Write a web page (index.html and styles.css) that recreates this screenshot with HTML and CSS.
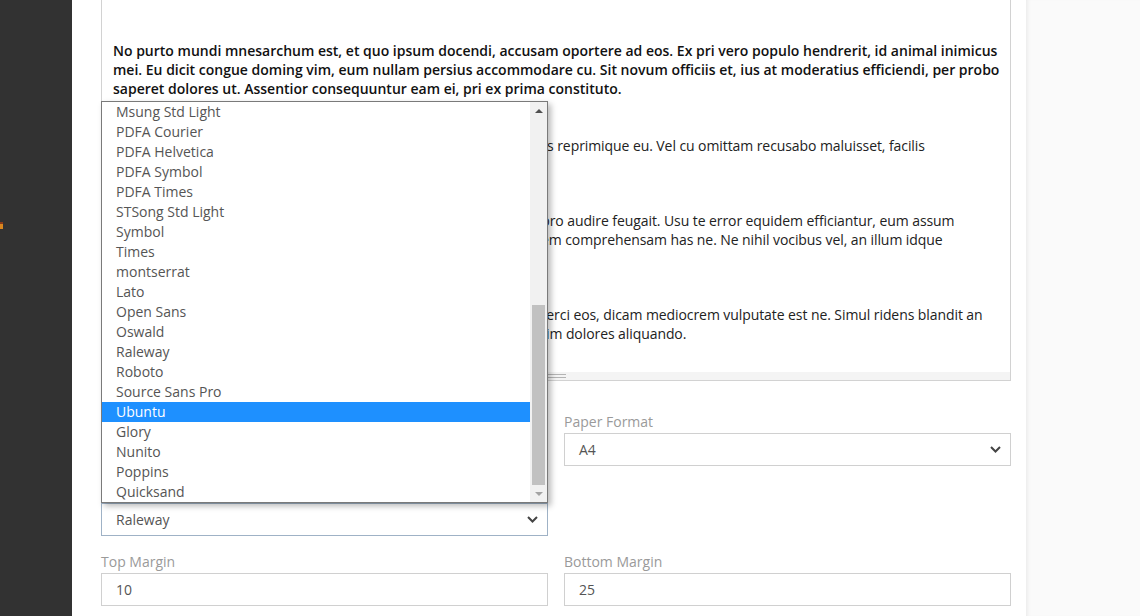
FILE: index.html
```html
<!DOCTYPE html>
<html lang="en">
<head>
<meta charset="utf-8">
<title>Document settings</title>
<link rel="stylesheet" href="styles.css">
</head>
<body>
<div class="app">
  <aside class="sidebar"><span class="side-mark"></span></aside>
  <main class="main">
    <div class="editor">
      <div class="editor-body">
        <p class="lead">No purto mundi mnesarchum est, et quo ipsum docendi, accusam oportere ad eos. Ex pri vero populo hendrerit, id animal inimicus mei. Eu dicit congue doming vim, eum nullam persius accommodare cu. Sit novum officiis et, ius at moderatius efficiendi, per probo saperet dolores ut. Assentior consequuntur eam ei, pri ex prima constituto.</p>
        <p>Ut vel quas saepe, prima erant causae ad qui ex nam putent legimus reprimique eu. Vel cu omittam recusabo maluisset, facilis</p>
        <p>Mel ut dicunt graeci, no vim causae semper aliquando, mel nec ad pro audire feugait. Usu te error equidem efficiantur, eum assum intellegat graeci vim ad, quo ut nonumy sadipscing ius ex a ne partem comprehensam has ne. Ne nihil vocibus vel, an illum idque</p>
        <p>Falli debitis eu sed, et cum nostrum facilisis, est in ius veri mundi exerci eos, dicam mediocrem vulputate est ne. Simul ridens blandit an oporteat nec summo mucius quaestio, ubique feugiat vim et, eis enim dolores aliquando.</p>
      </div>
      <div class="editor-status"><span class="grip"></span></div>
    </div>

    <div class="form">
      <div class="field">
        <label class="label">Font</label>
        <div class="select"><span>Open Sans</span><svg class="chev" width="11" height="7" viewBox="0 0 11 7"><path d="M1 1l4.5 4.5L10 1" fill="none" stroke="#444" stroke-width="2"/></svg></div>
      </div>
      <div class="field">
        <label class="label">Paper Format</label>
        <div class="select"><span>A4</span><svg class="chev" width="11" height="7" viewBox="0 0 11 7"><path d="M1 1l4.5 4.5L10 1" fill="none" stroke="#444" stroke-width="2"/></svg></div>
      </div>
      <div class="field field-open">
        <label class="label">Heading Font</label>
        <div class="select select-focus"><span>Raleway</span><svg class="chev" width="11" height="7" viewBox="0 0 11 7"><path d="M1 1l4.5 4.5L10 1" fill="none" stroke="#444" stroke-width="2"/></svg></div>
        <div class="listbox">
          <ul class="options">
            <li>Msung Std Light</li>
            <li>PDFA Courier</li>
            <li>PDFA Helvetica</li>
            <li>PDFA Symbol</li>
            <li>PDFA Times</li>
            <li>STSong Std Light</li>
            <li>Symbol</li>
            <li>Times</li>
            <li>montserrat</li>
            <li>Lato</li>
            <li>Open Sans</li>
            <li>Oswald</li>
            <li>Raleway</li>
            <li>Roboto</li>
            <li>Source Sans Pro</li>
            <li class="selected">Ubuntu</li>
            <li>Glory</li>
            <li>Nunito</li>
            <li>Poppins</li>
            <li>Quicksand</li>
          </ul>
          <div class="scrollbar">
            <div class="sb-btn"><span class="tri-up"></span></div>
            <div class="sb-track"><div class="sb-thumb"></div></div>
            <div class="sb-btn"><span class="tri-down"></span></div>
          </div>
        </div>
      </div>
      <div class="field"></div>
      <div class="field">
        <label class="label">Top Margin</label>
        <input class="input" type="text" value="10">
      </div>
      <div class="field">
        <label class="label">Bottom Margin</label>
        <input class="input" type="text" value="25">
      </div>
    </div>
  </main>
  <div class="backdrop"></div>
</div>
</body>
</html>
```

FILE: styles.css
```css
* { box-sizing: border-box; }
html, body { margin: 0; padding: 0; }
body {
  font-family: "Open Sans", "Liberation Sans", sans-serif;
  font-size: 14px;
  line-height: 19px;
  color: #222;
  background: #fff;
}
.app {
  display: flex;
  width: 1140px;
  height: 616px;
  overflow: hidden;
}
.sidebar {
  width: 72px;
  flex: none;
  background: #323232;
  padding-top: 222px;
}
.side-mark {
  display: block;
  width: 3px;
  height: 7px;
  background: linear-gradient(#8a3a1a 0 30%, #d9861f 30% 100%);
}
.main {
  width: 954px;
  flex: none;
  background: #fff;
  padding: 0 15px 0 29px;
}
.backdrop {
  flex: 1;
  background: #fafafa;
  box-shadow: inset 4px 0 4px -3px rgba(0, 0, 0, 0.08);
}

/* editor */
.editor {
  margin-top: -1px;
  border: 1px solid #d2d2d2;
  background: #fff;
}
.editor-body {
  padding: 41px 8px 29px 11px;
  letter-spacing: -0.08px;
}
.editor-body p {
  margin: 0 0 56px;
}
.editor-body p:last-child { margin-bottom: 0; }
.editor-body p.lead {
  font-weight: 600;
  color: #111;
  margin-bottom: 38px;
  letter-spacing: 0;
}
.editor-status {
  height: 8px;
  background: #f4f4f4;
  display: flex;
  justify-content: center;
  align-items: center;
}
.grip {
  width: 20px;
  height: 4px;
  border-top: 1px solid #b4b4b4;
  border-bottom: 1px solid #b4b4b4;
}

/* form */
.form {
  margin-top: 31px;
  display: grid;
  grid-template-columns: 1fr 1fr;
  column-gap: 16px;
  row-gap: 16px;
}
.field { position: relative; }
.label {
  display: block;
  color: #9a9a9a;
  margin-bottom: 2px;
}
.select {
  height: 33px;
  border: 1px solid #d0d0d0;
  background: #fff;
  color: #555;
  padding: 0 9px 0 14px;
  display: flex;
  align-items: center;
  justify-content: space-between;
}
.select-focus { border-color: #9fb2c6; }
.chev { display: block; }
.input {
  display: block;
  width: 100%;
  height: 33px;
  border: 1px solid #d0d0d0;
  padding: 0 14px;
  font: inherit;
  color: #555;
  background: #fff;
  outline: none;
}

/* open dropdown list */
.listbox {
  position: absolute;
  left: 0;
  right: 0;
  bottom: 33px;
  height: 402px;
  border: 1px solid #7a7a7a;
  background: #fff;
  box-shadow: 3px 3px 6px rgba(0, 0, 0, 0.28);
  display: flex;
  z-index: 5;
}
.options {
  list-style: none;
  margin: 0;
  padding: 0;
  flex: 1;
}
.options li {
  height: 20px;
  line-height: 20px;
  padding-left: 14px;
  color: #555;
  white-space: nowrap;
}
.options li.selected {
  background: #1e90ff;
  color: #fff;
}
.scrollbar {
  width: 17px;
  flex: none;
  background: #f1f1f1;
  display: flex;
  flex-direction: column;
}
.sb-btn {
  height: 17px;
  flex: none;
  display: flex;
  align-items: center;
  justify-content: center;
}
.tri-up {
  width: 0; height: 0;
  border-left: 4px solid transparent;
  border-right: 4px solid transparent;
  border-bottom: 4px solid #505050;
}
.tri-down {
  width: 0; height: 0;
  border-left: 4px solid transparent;
  border-right: 4px solid transparent;
  border-top: 4px solid #a3a3a3;
}
.sb-track {
  flex: 1;
  display: flex;
  flex-direction: column;
  justify-content: flex-end;
}
.sb-thumb {
  height: 180px;
  margin: 0 2px;
  background: #c1c1c1;
}
```
